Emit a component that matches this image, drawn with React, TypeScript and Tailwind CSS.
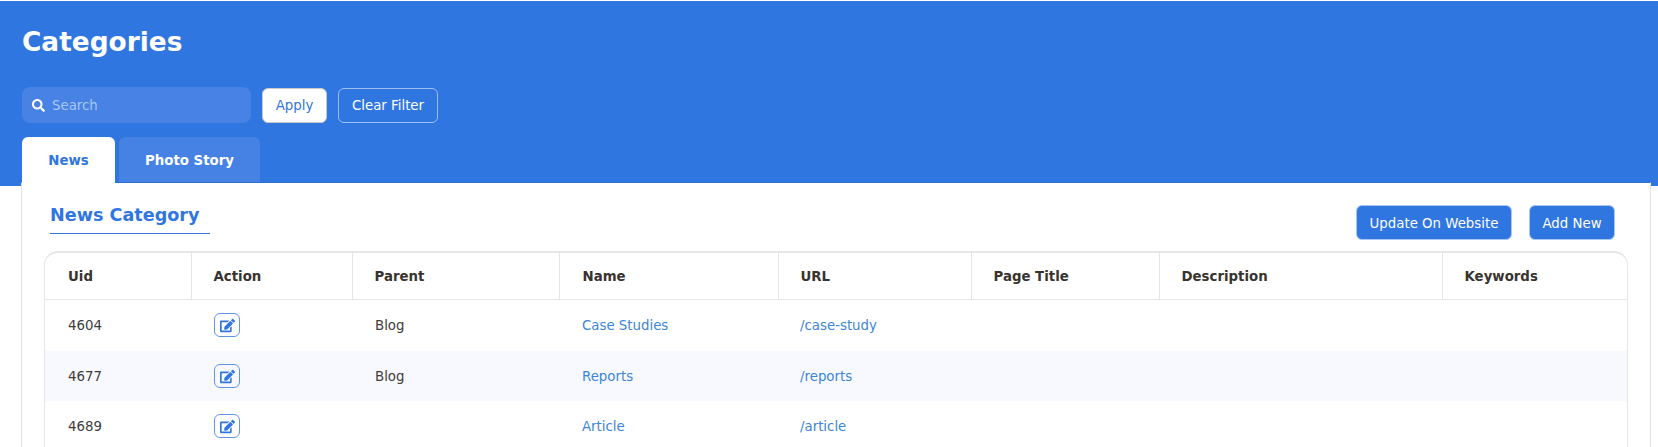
import React from "react";
import { FaSearch, FaEdit } from "react-icons/fa";

const rows = [
  { uid: "4604", parent: "Blog", name: "Case Studies", url: "/case-study" },
  { uid: "4677", parent: "Blog", name: "Reports", url: "/reports" },
  { uid: "4689", parent: "", name: "Article", url: "/article" },
];

const columns = [
  { label: "Uid", width: "w-[146px]", pad: "pl-[23px]" },
  { label: "Action", width: "w-[161px]", pad: "pl-[22px]" },
  { label: "Parent", width: "w-[207px]", pad: "pl-[22px]" },
  { label: "Name", width: "w-[219px]", pad: "pl-[23px]" },
  { label: "URL", width: "w-[193px]", pad: "pl-[22px]" },
  { label: "Page Title", width: "w-[188px]", pad: "pl-[22px]" },
  { label: "Description", width: "w-[283px]", pad: "pl-[22px]" },
  { label: "Keywords", width: "w-[185px]", pad: "pl-[22px]" },
];

export default function App() {
  return (
    <div className="h-[447px] overflow-hidden bg-white font-['DejaVu_Sans',sans-serif] text-[13.33px]">
      {/* Blue header */}
      <header className="mt-px h-[185px] bg-[#3076e0] px-[22px] pt-[26px]">
        <h1 className="text-[26.4px] font-bold leading-[30px] text-white">Categories</h1>
        <div className="mt-[30px] flex items-start">
          <div className="flex h-9 w-[229px] items-center gap-[7px] rounded-lg bg-[#4782e4] pl-[10px] text-[#a9c6f3]">
            <FaSearch className="size-[13px] text-white" />
            <span className="pt-px">Search</span>
          </div>
          <button className="ml-[11px] mt-px h-[35px] w-[65px] rounded-md border border-[#c9c9c9] bg-white text-[#3076e0]">
            Apply
          </button>
          <button className="ml-[11px] mt-px h-[35px] w-[100px] rounded-md border border-[#9dbff0] text-white">
            Clear Filter
          </button>
        </div>
        <nav className="mt-[14px] flex gap-1 font-bold">
          <div className="relative z-10 flex h-[47px] w-[93px] items-center justify-center rounded-t-md bg-white text-[#3076e0]">
            News
          </div>
          <div className="flex h-[46px] w-[141px] items-center justify-center rounded-t-md bg-[#4582e4] pt-px text-white">
            Photo Story
          </div>
        </nav>
      </header>

      {/* Card */}
      <main className="relative ml-[21px] mr-[7px] -mt-[4px] h-[300px] border-x border-t border-[#e2e2e2] border-t-[#2a6cd0] bg-white px-[22px]">
        <div className="flex h-[68px] items-start justify-between">
          <h2 className="ml-[6px] mt-[22px] w-[160px] border-b border-[#3076e0] pb-[7px] text-[17.6px] font-bold leading-[21px] text-[#3076e0]">
            News Category
          </h2>
          <div className="mr-[13px] mt-[22px] flex gap-[17px] text-white">
            <button className="h-[35px] w-[156px] rounded-md border border-[#a9c6f3] bg-[#3076e0] pt-[2px]">
              Update On Website
            </button>
            <button className="h-[35px] w-[86px] rounded-md border border-[#a9c6f3] bg-[#3076e0] pt-[2px]">
              Add New
            </button>
          </div>
        </div>

        <div className="overflow-hidden rounded-t-[14px] border-x border-t-2 border-[#e6e6e6]">
          <table className="w-full table-fixed border-collapse">
            <thead>
              <tr className="h-[46px] border-b border-[#e6e6e6] text-left font-bold text-[#38332e]">
                {columns.map((c, i) => (
                  <th
                    key={c.label}
                    className={`${c.width} ${c.pad} pt-[2px] font-bold ${i < columns.length - 1 ? "border-r border-[#e6e6e6]" : ""}`}
                  >
                    {c.label}
                  </th>
                ))}
              </tr>
            </thead>
            <tbody className="text-[#3d3d3d]">
              {rows.map((r, i) => (
                <tr key={r.uid} className={`${i === 0 ? "h-[52px]" : "h-[50px]"} ${i === 1 ? "bg-[#f8f9fe]" : ""}`}>
                  <td className="pl-[23px] pt-[2px]">{r.uid}</td>
                  <td className="pl-[23px]">
                    <span className="flex h-[24px] w-[26px] items-center justify-center rounded-md border border-[#5f95e8] text-[#3076e0]">
                      <FaEdit className="size-[15px]" />
                    </span>
                  </td>
                  <td className="pl-[23px] pt-[2px]">{r.parent}</td>
                  <td className="pl-[23px] pt-[2px] text-[#3d85d6]">{r.name}</td>
                  <td className="pl-[22px] pt-[2px] text-[#3d85d6]">{r.url}</td>
                  <td />
                  <td />
                  <td />
                </tr>
              ))}
            </tbody>
          </table>
        </div>
      </main>
    </div>
  );
}
